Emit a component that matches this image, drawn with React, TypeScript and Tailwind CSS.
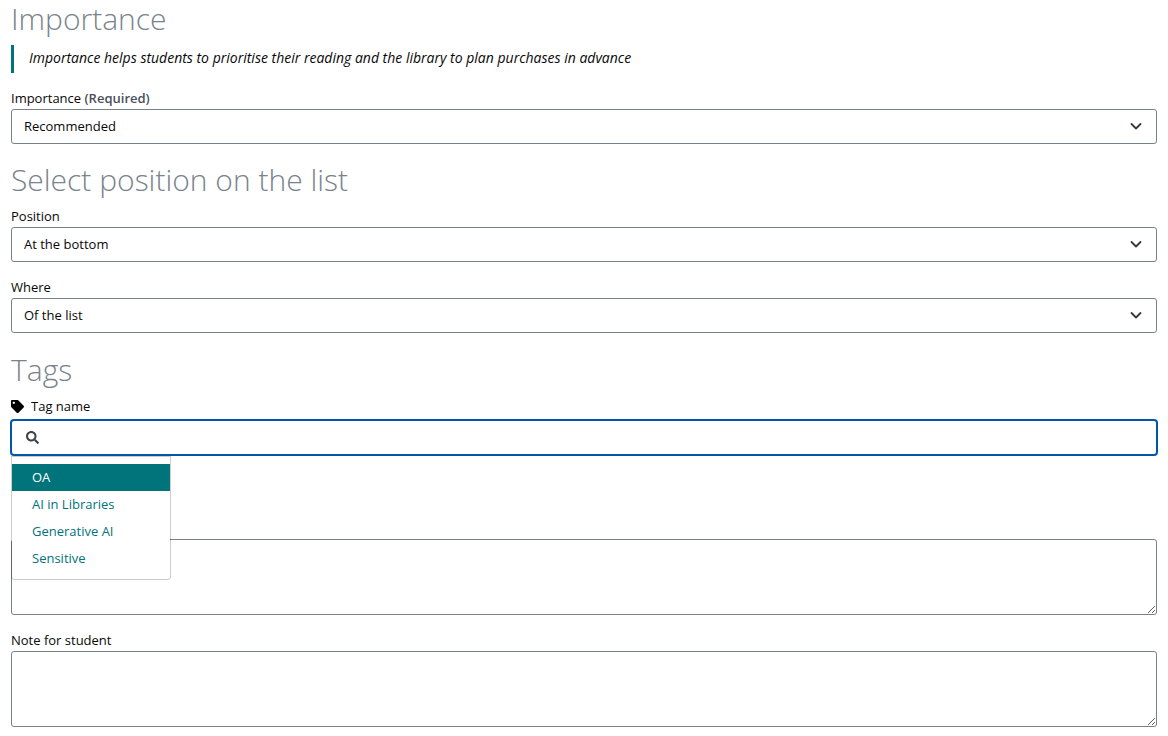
import { useState } from "react"
import type { ReactNode } from "react"
import { FaSearch, FaTag } from "react-icons/fa"

const TAGS = ["OA", "AI in Libraries", "Generative AI", "Sensitive"]

function Heading({ children }: { children: ReactNode }) {
  return (
    <h2 className="text-[30px] leading-9 font-light text-[#79838c]">{children}</h2>
  )
}

interface SelectFieldProps {
  id: string
  label: string
  required?: boolean
  options: string[]
}

function SelectField({ id, label, required, options }: SelectFieldProps) {
  return (
    <div>
      <label htmlFor={id} className="block pb-px leading-5">
        {label}
        {required && <span className="font-semibold text-[#495057]"> (Required)</span>}
      </label>
      <div className="relative">
        <select
          id={id}
          className="block h-[35px] w-full appearance-none rounded-[3px] border border-[#76818b] bg-white px-3"
        >
          {options.map(option => (
            <option key={option}>{option}</option>
          ))}
        </select>
        <svg
          viewBox="0 0 12 8"
          className="pointer-events-none absolute top-[13px] right-[15px] h-2 w-3"
          fill="none"
          stroke="#343a40"
          strokeWidth="1.8"
          strokeLinecap="round"
          strokeLinejoin="round"
        >
          <path d="M1.5 2 6 6.5 10.5 2" />
        </svg>
      </div>
    </div>
  )
}

function TagPicker() {
  const [query, setQuery] = useState("")
  const [active, setActive] = useState(0)

  const matches = TAGS.filter(tag => tag.toLowerCase().includes(query.toLowerCase()))

  return (
    <div>
      <label htmlFor="tag-name" className="flex items-center gap-[7px] pb-[3px] leading-5">
        <FaTag className="size-[13px] text-black" />
        Tag name
      </label>
      <div className="relative -mx-px">
        <div className="flex h-[37px] items-center gap-2 rounded-[4px] border-2 border-[#0057a8] bg-white px-[14px]">
          <FaSearch className="size-[13px] text-[#3c444b]" />
          <input
            id="tag-name"
            type="text"
            autoComplete="off"
            value={query}
            onChange={e => {
              setQuery(e.target.value)
              setActive(0)
            }}
            className="h-full flex-1 outline-none"
          />
        </div>
        <ul className="absolute top-full left-px z-10 min-w-40 rounded-b-[4px] border border-black/20 bg-white bg-clip-padding py-[7px]">
          {matches.map((tag, i) => (
            <li key={tag}>
              <button
                type="button"
                onMouseEnter={() => setActive(i)}
                onClick={() => setQuery(tag)}
                className={
                  i === active
                    ? "block h-[27px] w-full bg-[#00747a] px-5 text-left text-white"
                    : "block h-[27px] w-full px-5 text-left text-[#00747a]"
                }
              >
                {tag}
              </button>
            </li>
          ))}
        </ul>
      </div>
    </div>
  )
}

export default function App() {
  return (
    <form className="bg-white px-[11px] pt-px pb-[9px] font-['Open_Sans','Noto_Sans',sans-serif] text-[13px] text-[#080808]">
      <section>
        <Heading>Importance</Heading>
        <p className="mt-2 mb-[15px] border-l-3 border-[#00747a] pb-0.5 pl-[15px] text-[14px] leading-[26px] italic">
          Importance helps students to prioritise their reading and the library to plan purchases in advance
        </p>
        <SelectField
          id="importance"
          label="Importance"
          required
          options={["Recommended", "Essential", "Further reading"]}
        />
      </section>

      <section className="mt-[18px]">
        <Heading>Select position on the list</Heading>
        <div className="mt-2 flex flex-col gap-[15px]">
          <SelectField id="position" label="Position" options={["At the bottom", "At the top"]} />
          <SelectField id="where" label="Where" options={["Of the list", "Of a section"]} />
        </div>
      </section>

      <section className="mt-[19px]">
        <Heading>Tags</Heading>
        <div className="mt-2">
          <TagPicker />
        </div>
      </section>

      <section className="mt-[83px] flex flex-col gap-[15px]">
        <textarea
          aria-label="Note for library"
          className="block h-[76px] w-full rounded-[3px] border border-[#76818b] bg-white px-3 py-2"
        />
        <div>
          <label htmlFor="student-note" className="block pb-px leading-5">
            Note for student
          </label>
          <textarea
            id="student-note"
            className="block h-[76px] w-full rounded-[3px] border border-[#76818b] bg-white px-3 py-2"
          />
        </div>
      </section>
    </form>
  )
}
